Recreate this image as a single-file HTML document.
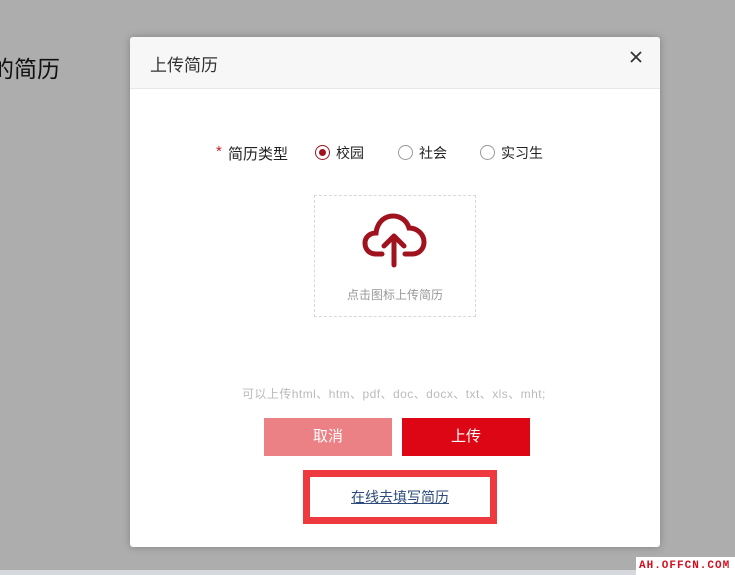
<!DOCTYPE html>
<html><head><meta charset="utf-8"><style>
*{margin:0;padding:0;box-sizing:border-box}
body{width:735px;height:575px;background:#adadad;position:relative;overflow:hidden;font-family:"Liberation Sans","Noto Sans CJK SC",sans-serif}
.bg{position:absolute;left:-9px;top:50px;font-size:23px;color:#111}
.modal{position:absolute;left:130px;top:37px;width:530px;height:510px;background:#fff;border-radius:3px;box-shadow:0 0 8px rgba(0,0,0,.25)}
.hd{height:52px;background:#f7f7f7;border-bottom:1px solid #e8e8e8;border-radius:3px 3px 0 0;font-size:17px;color:#333;padding:14px 0 0 20px}
.x{position:absolute;right:18px;top:14px}
.row{position:absolute;top:106px;left:86px;font-size:15px;color:#222;white-space:nowrap}
.row span{position:absolute;top:0}
.r{position:absolute;width:15px;height:15px;border:1px solid #999;border-radius:50%;top:2px}
.r.on{border-color:#a0131e}
.r.on:after{content:"";position:absolute;left:3px;top:3px;width:7px;height:7px;border-radius:50%;background:#a0131e}
.up{position:absolute;left:184px;top:158px;width:162px;height:122px;border:1px dashed #d8d8d8}
.up p{position:absolute;top:90px;width:100%;text-align:center;font-size:12px;color:#999}
.tip{position:absolute;top:348px;left:112px;font-size:12px;color:#bbb;letter-spacing:0.45px}
.b{position:absolute;top:381px;width:128px;height:38px;color:#fff;font-size:15px;text-align:center;line-height:38px}
.link{position:absolute;left:173px;top:433px;width:194px;height:54px;border:7px solid #ee3a3e;text-align:center;line-height:40px;font-size:14px;color:#2c4a7a;text-decoration:underline}
.strip{position:absolute;left:0;top:570px;width:735px;height:5px;background:#d5d8dc}
.wm{position:absolute;left:636px;top:557px;width:99px;height:18px;background:#fff;color:#d01020;font:bold 11px "Liberation Mono",monospace;letter-spacing:1px;padding:3px 0 0 3px}
</style></head><body>
<div class="bg">的简历</div>
<div class="modal">
<div class="hd">上传简历</div>
<svg class="x" width="12" height="12" viewBox="0 0 12 12"><path d="M1 1L11 11M11 1L1 11" stroke="#333" stroke-width="1.8"/></svg>
<div class="row">
<span style="left:0;color:#c0242a">*</span><span style="left:12px">简历类型</span>
<div class="r on" style="left:99px"></div><span style="left:120px;font-size:14px">校园</span>
<div class="r" style="left:182px"></div><span style="left:203px;font-size:14px">社会</span>
<div class="r" style="left:264px"></div><span style="left:285px;font-size:14px">实习生</span>
</div>
<div class="up">
<svg style="position:absolute;left:47px;top:16px" width="66" height="56" viewBox="0 0 66 56"><path d="M20 42H14C7 42 3 37 3 31C3 25 8 21 14 21C15 11 22 4 31 4C39 4 45 9 47 16C55 16 62 22 62 30C62 37 57 42 50 42H43" fill="none" stroke="#a0131e" stroke-width="5" stroke-linecap="round"/><path d="M32 53V24M22 34L32 24L42 34" fill="none" stroke="#a0131e" stroke-width="5" stroke-linecap="round" stroke-linejoin="round"/></svg>
<p>点击图标上传简历</p>
</div>
<div class="tip">可以上传html、htm、pdf、doc、docx、txt、xls、mht;</div>
<div class="b" style="left:134px;background:#eb8185">取消</div>
<div class="b" style="left:272px;background:#dc0614">上传</div>
<div class="link">在线去填写简历</div>
</div>
<div class="strip"></div>
<div class="wm">AH.OFFCN.COM</div>
</body></html>
